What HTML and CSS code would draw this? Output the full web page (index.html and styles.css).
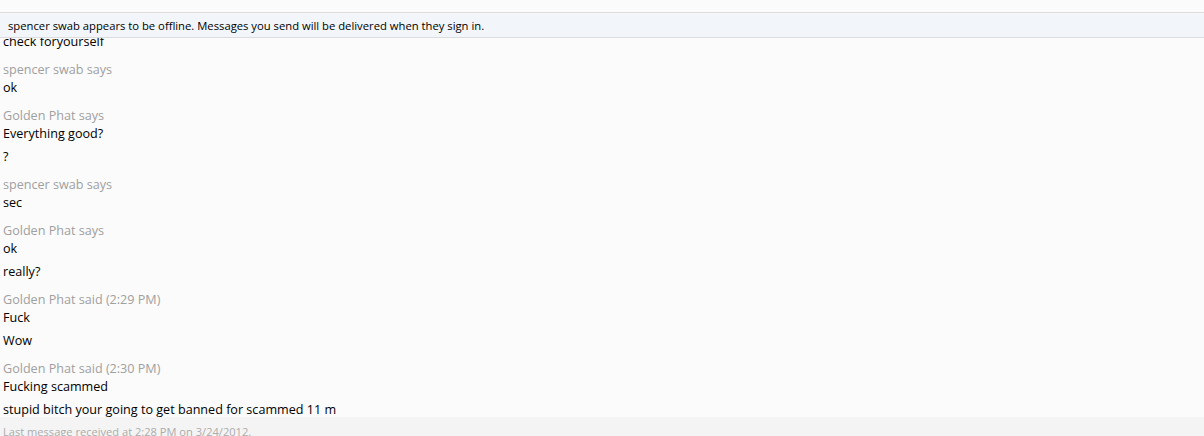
FILE: index.html
```html
<!DOCTYPE html>
<html>
<head>
<meta charset="utf-8">
<link rel="stylesheet" href="styles.css">
</head>
<body>
<div class="window">
  <div class="topgap"></div>
  <div class="banner">spencer swab appears to be offline. Messages you send will be delivered when they sign in.</div>
  <div class="log">
    <div class="group first">
      <div class="msg">check foryourself</div>
    </div>
    <div class="group">
      <div class="who">spencer swab says</div>
      <div class="msg">ok</div>
    </div>
    <div class="group">
      <div class="who">Golden Phat says</div>
      <div class="msg">Everything good?</div>
      <div class="msg">?</div>
    </div>
    <div class="group">
      <div class="who">spencer swab says</div>
      <div class="msg">sec</div>
    </div>
    <div class="group">
      <div class="who">Golden Phat says</div>
      <div class="msg">ok</div>
      <div class="msg">really?</div>
    </div>
    <div class="group">
      <div class="who">Golden Phat said (2:29 PM)</div>
      <div class="msg">Fuck</div>
      <div class="msg">Wow</div>
    </div>
    <div class="group">
      <div class="who">Golden Phat said (2:30 PM)</div>
      <div class="msg">Fucking scammed</div>
      <div class="msg">stupid bitch your going to get banned for scammed 11 m</div>
    </div>
  </div>
  <div class="footer">Last message received at 2:28 PM on 3/24/2012.</div>
</div>
</body>
</html>
```
FILE: styles.css
```css
html, body {
  margin: 0;
  padding: 0;
  background: #fbfbfb;
}
.window {
  width: 1204px;
  height: 436px;
  overflow: hidden;
  display: flex;
  flex-direction: column;
  font-family: "Open Sans", "Noto Sans", sans-serif;
  font-size: 12.6px;
  color: #000;
}
.topgap {
  height: 12px;
  flex: none;
}
.banner {
  flex: none;
  height: 24px;
  line-height: 25px;
  background: #f2f6fb;
  border-top: 1px solid #dcdcdc;
  border-bottom: 1px solid #dcdcdc;
  padding-left: 8px;
  font-size: 11.25px;
  color: #000;
}
.log {
  flex: none;
  height: 379px;
  overflow: hidden;
  padding-left: 3px;
}
.group {
  margin-top: 10px;
}
.group.first {
  margin-top: -5px;
}
.who {
  line-height: 18px;
  color: #a0a0a0;
}
.msg {
  line-height: 18px;
}
.msg + .msg {
  margin-top: 5px;
}
.footer {
  flex: 1;
  background: #f4f4f4;
  padding-left: 3px;
  padding-top: 6px;
  line-height: 18px;
  font-size: 11.1px;
  color: #acacac;
}
```
